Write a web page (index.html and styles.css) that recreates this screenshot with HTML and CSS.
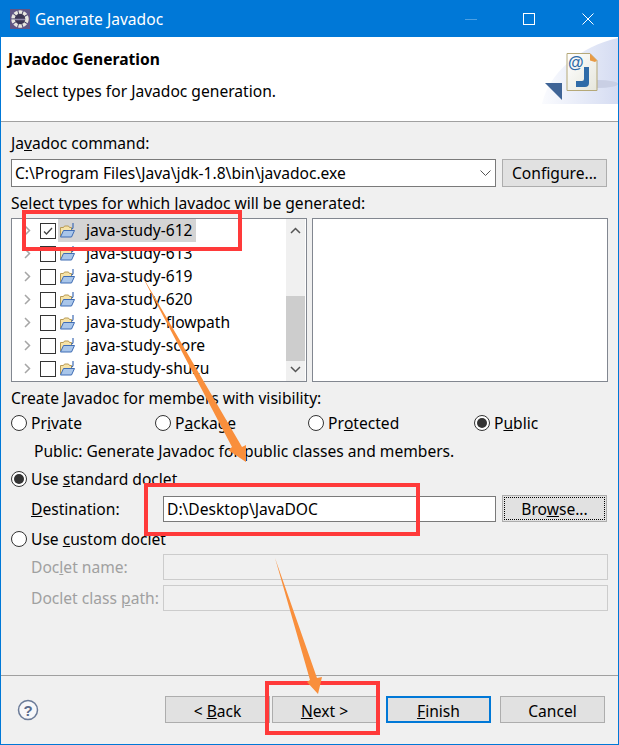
FILE: index.html
```html
<!DOCTYPE html>
<html lang="en">
<head>
    <meta charset="UTF-8">
    <title>Generate Javadoc</title>
    <link rel="stylesheet" href="styles.css">
</head>
<body>

<div class="window">

    <div class="titlebar">
        <svg class="app-icon" width="20" height="20" viewBox="0 0 20 20">
            <rect width="20" height="20" fill="#5f5585"/>
            <circle cx="10" cy="10" r="7" fill="#3c3654" stroke="#e8e6e0" stroke-width="3.500" stroke-dasharray="3.500 1"/>
            <path d="M5 10.500h10" stroke="#8f88a8" stroke-width="1.500"/>
        </svg>
        <span class="title">Generate Javadoc</span>
        <div class="win-controls">
            <svg width="12" height="12" viewBox="0 0 12 12" class="win-min"><path d="M0 6.500h12" stroke="#4da0e3"/></svg>
            <svg width="12" height="12" viewBox="0 0 12 12" class="win-max"><rect x=".5" y=".5" width="11" height="11" fill="none" stroke="#fff"/></svg>
            <svg width="12" height="12" viewBox="0 0 12 12" class="win-close"><path d="M.5 .5l11 11M11.500 .5l-11 11" stroke="#fff"/></svg>
        </div>
    </div>

    <div class="banner">
        <div class="banner-text">
            <h1>Javadoc Generation</h1>
            <p>Select types for Javadoc generation.</p>
        </div>
        <svg class="banner-art" width="76" height="66" viewBox="0 0 76 66">
            <defs>
                <linearGradient id="fade" x1="0" x2="1" y1="0" y2="0">
                    <stop offset="0" stop-color="#fafbfe"/>
                    <stop offset="1" stop-color="#d5dcf2"/>
                </linearGradient>
                <linearGradient id="page" x1="0" x2="1" y1="0" y2="1">
                    <stop offset="0" stop-color="#ffffff"/>
                    <stop offset="1" stop-color="#e6e6dc"/>
                </linearGradient>
            </defs>
            <path d="M0 66C6 36 38 8 76 0V66z" fill="url(#fade)"/>
            <ellipse cx="56" cy="46" rx="20" ry="4" fill="#c9cfe4"/>
            <path d="M25 15.500h23l7 7v30H25z" fill="url(#page)" stroke="#b5a878"/>
            <path d="M48 15.500l7 7-2 1.500-5-1.500z" fill="#e89a45"/>
            <text x="26" y="30" class="art-at">@</text>
            <path d="M42 29h5v16q0 4-4 4h-9v-6h6q2 0 2-2z" fill="#2f6ba8"/>
            <path d="M3 45h17v17z" fill="#3f6496"/>
        </svg>
    </div>

    <div class="content">
        <label class="line first-line">Ja<u>v</u>adoc command:</label>
        <div class="field-row combo-row">
            <div class="combo">
                <span>C:\Program Files\Java\jdk-1.8\bin\javadoc.exe</span>
                <svg width="11" height="6" viewBox="0 0 11 6"><path d="M.5 .5l5 5 5-5" fill="none" stroke="#555"/></svg>
            </div>
            <button class="btn side-btn">Confi<u>g</u>ure...</button>
        </div>

        <label class="line select-line">Select types for which Javadoc will be generated:</label>
        <div class="lists">
            <div class="tree">
                <div class="tree-rows">
                    <div class="tree-row">
                        <svg class="chev" width="7" height="11" viewBox="0 0 7 11"><path d="M1 1l4.500 4.500L1 10" fill="none" stroke="#a6a6a6" stroke-width="1.500"/></svg>
                        <span class="check"><svg width="14" height="14" viewBox="0 0 14 14"><path d="M3 7.500l2.500 2.500L11 4" fill="none" stroke="#444" stroke-width="1.300"/></svg></span>
                        <span class="row-sel">
                            <svg class="folder" width="17" height="16" viewBox="0 0 17 16"><use href="#project"/></svg>
                            <span class="row-name">java-study-612</span>
                        </span>
                    </div>
                    <div class="tree-row">
                        <svg class="chev" width="7" height="11" viewBox="0 0 7 11"><path d="M1 1l4.500 4.500L1 10" fill="none" stroke="#a6a6a6" stroke-width="1.500"/></svg>
                        <span class="check"></span>
                        <span class="row-sel">
                            <svg class="folder" width="17" height="16" viewBox="0 0 17 16"><use href="#project"/></svg>
                            <span class="row-name">java-study-613</span>
                        </span>
                    </div>
                    <div class="tree-row">
                        <svg class="chev" width="7" height="11" viewBox="0 0 7 11"><path d="M1 1l4.500 4.500L1 10" fill="none" stroke="#a6a6a6" stroke-width="1.500"/></svg>
                        <span class="check"></span>
                        <span class="row-sel">
                            <svg class="folder" width="17" height="16" viewBox="0 0 17 16"><use href="#project"/></svg>
                            <span class="row-name">java-study-619</span>
                        </span>
                    </div>
                    <div class="tree-row">
                        <svg class="chev" width="7" height="11" viewBox="0 0 7 11"><path d="M1 1l4.500 4.500L1 10" fill="none" stroke="#a6a6a6" stroke-width="1.500"/></svg>
                        <span class="check"></span>
                        <span class="row-sel">
                            <svg class="folder" width="17" height="16" viewBox="0 0 17 16"><use href="#project"/></svg>
                            <span class="row-name">java-study-620</span>
                        </span>
                    </div>
                    <div class="tree-row">
                        <svg class="chev" width="7" height="11" viewBox="0 0 7 11"><path d="M1 1l4.500 4.500L1 10" fill="none" stroke="#a6a6a6" stroke-width="1.500"/></svg>
                        <span class="check"></span>
                        <span class="row-sel">
                            <svg class="folder" width="17" height="16" viewBox="0 0 17 16"><use href="#project"/></svg>
                            <span class="row-name">java-study-flowpath</span>
                        </span>
                    </div>
                    <div class="tree-row">
                        <svg class="chev" width="7" height="11" viewBox="0 0 7 11"><path d="M1 1l4.500 4.500L1 10" fill="none" stroke="#a6a6a6" stroke-width="1.500"/></svg>
                        <span class="check"></span>
                        <span class="row-sel">
                            <svg class="folder" width="17" height="16" viewBox="0 0 17 16"><use href="#project"/></svg>
                            <span class="row-name">java-study-score</span>
                        </span>
                    </div>
                    <div class="tree-row">
                        <svg class="chev" width="7" height="11" viewBox="0 0 7 11"><path d="M1 1l4.500 4.500L1 10" fill="none" stroke="#a6a6a6" stroke-width="1.500"/></svg>
                        <span class="check"></span>
                        <span class="row-sel">
                            <svg class="folder" width="17" height="16" viewBox="0 0 17 16"><use href="#project"/></svg>
                            <span class="row-name">java-study-shuzu</span>
                        </span>
                    </div>
                </div>
                <div class="scrollbar">
                    <svg width="11" height="7" viewBox="0 0 11 7"><path d="M1 6l4.500-4.500L10 6" fill="none" stroke="#555" stroke-width="1.500"/></svg>
                    <div class="scroll-track"><div class="scroll-thumb"></div></div>
                    <svg width="11" height="7" viewBox="0 0 11 7"><path d="M1 1l4.500 4.500L10 1" fill="none" stroke="#555" stroke-width="1.500"/></svg>
                </div>
            </div>
            <div class="members"></div>
        </div>

        <label class="line visibility-line">Create Javadoc for members with visibility:</label>
        <div class="radio-grid">
            <div class="radio-item"><span class="radio"></span>Pr<u>i</u>vate</div>
            <div class="radio-item"><span class="radio"></span>P<u>a</u>ckage</div>
            <div class="radio-item"><span class="radio"></span>Pr<u>o</u>tected</div>
            <div class="radio-item"><span class="radio on"></span>P<u>u</u>blic</div>
        </div>
        <p class="line desc">Public: Generate Javadoc for public classes and members.</p>

        <div class="radio-item standard"><span class="radio on"></span>Use <u>s</u>tandard doclet</div>
        <div class="field-row dest-row">
            <label class="field-label"><u>D</u>estination:</label>
            <div class="input">D:\Desktop\JavaDOC</div>
            <button class="btn side-btn focused">Bro<u>w</u>se...</button>
        </div>

        <div class="radio-item custom"><span class="radio"></span>Use <u>c</u>ustom doclet</div>
        <div class="field-row doclet-row">
            <label class="field-label off">Doc<u>l</u>et name:</label>
            <div class="input off"></div>
        </div>
        <div class="field-row path-row">
            <label class="field-label off">Doclet class <u>p</u>ath:</label>
            <div class="input off"></div>
        </div>
    </div>

    <div class="footer">
        <svg class="help" width="22" height="22" viewBox="0 0 22 22">
            <circle cx="11" cy="11" r="9.500" fill="#f7f7f9" stroke="#6b7b98" stroke-width="1.500"/>
            <text x="11" y="16.500" text-anchor="middle" class="help-mark">?</text>
        </svg>
        <div class="buttons">
            <button class="btn">&lt; <u>B</u>ack</button>
            <button class="btn next-btn"><u>N</u>ext &gt;</button>
            <button class="btn default-btn"><u>F</u>inish</button>
            <button class="btn cancel-btn">Cancel</button>
        </div>
    </div>

    <!-- red boxes and arrows drawn over the screenshot -->
    <svg class="notes" width="619" height="745" viewBox="0 0 619 745">
        <rect x="24" y="212" width="216" height="37" fill="none" stroke="#ff3a3a" stroke-width="4"/>
        <rect x="146" y="485" width="272" height="49" fill="none" stroke="#ff3a3a" stroke-width="4"/>
        <rect x="267" y="683" width="111" height="50" fill="none" stroke="#ff3a3a" stroke-width="4"/>
        <path d="M140 272L242 447L246 445L246 462L228 450L232 447z" fill="#f98f3c"/>
        <path d="M275 558L317 678L322 677L318 694L307 682L310 680z" fill="#f98f3c"/>
    </svg>

    <svg width="0" height="0" class="defs">
        <symbol id="project" viewBox="0 0 17 16">
            <path d="M1.500 13V4.500h3l1-1.500h4l1 1.500h2V7" fill="#f6e3a8" stroke="#b89a55"/>
            <path d="M1.500 14l3-6.500h11l-3 6.500z" fill="#a9c6ea" stroke="#3f6cb4"/>
            <path d="M14 0v4.500q0 1.500-2 1.500" fill="none" stroke="#3f6cb4" stroke-width="1.200"/>
        </symbol>
    </svg>

</div>

</body>
</html>
```

FILE: styles.css
```css
* {
    box-sizing: border-box;
}

body {
    margin: 0;
    font-family: "Noto Sans", "Open Sans", sans-serif;
    font-size: 15.6px;
    color: #000;
}

.window {
    position: relative;
    width: 619px;
    height: 745px;
    display: flex;
    flex-direction: column;
    background-color: #f0f0f0;
    border: 1px solid #0078d7;
    border-top: 0;
    overflow: hidden;
}

.titlebar {
    height: 37px;
    flex: none;
    display: flex;
    align-items: center;
    padding-left: 9px;
    background-color: #0078d7;
    color: #fff;
}

.title {
    margin-left: 5px;
}

.win-controls {
    margin-left: auto;
    display: flex;
    align-items: center;
    padding-right: 24px;
}

.win-controls svg {
    display: block;
}

.win-max {
    margin-left: 46px;
}

.win-close {
    margin-left: 47px;
}

.banner {
    height: 85px;
    flex: none;
    display: flex;
    justify-content: space-between;
    align-items: flex-start;
    background-color: #fff;
    border-bottom: 1px solid #a0a0a0;
}

.banner-text {
    padding: 11px 0 0 7px;
}

.banner h1 {
    margin: 0;
    font-size: 15.6px;
    font-weight: 700;
    line-height: 22px;
}

.banner p {
    margin: 10px 0 0 7px;
    line-height: 22px;
}

.banner-art {
    display: block;
    margin-top: 1px;
}

.art-at {
    font-family: "Liberation Sans", sans-serif;
    font-size: 16px;
    font-weight: 700;
    fill: #2f6ba8;
}

.content {
    flex: 1;
    padding: 11px 10px 0;
}

.line {
    display: block;
    height: 20px;
    line-height: 20px;
    margin: 0;
    white-space: nowrap;
}

.select-line {
    margin-top: 6px;
}

.visibility-line {
    margin-top: 6px;
}

.field-row {
    display: flex;
    align-items: stretch;
}

.combo-row {
    height: 28px;
    margin-top: 6px;
    gap: 6px;
}

.combo {
    flex: 1;
    display: flex;
    align-items: center;
    justify-content: space-between;
    padding: 0 4px 0 3px;
    background-color: #fff;
    border: 1px solid #7a7a7a;
}

.btn {
    font: inherit;
    color: #000;
    height: 27px;
    width: 105px;
    padding: 0;
    background-color: #e1e1e1;
    border: 1px solid #adadad;
}

.side-btn {
    flex: none;
    height: 28px;
    margin-right: 1px;
}

.focused {
    outline: 1px dotted #000;
    outline-offset: -3px;
}

.lists {
    display: flex;
    gap: 5px;
    height: 164px;
    margin-top: 5px;
}

.tree {
    width: 296px;
    display: flex;
    background-color: #fff;
    border: 1px solid #828790;
}

.tree-rows {
    flex: 1;
    overflow: hidden;
}

.tree-row {
    height: 23px;
    display: flex;
    align-items: center;
    padding-left: 12px;
}

.chev {
    flex: none;
}

.check {
    flex: none;
    width: 16px;
    height: 16px;
    margin-left: 9px;
    display: flex;
    align-items: center;
    justify-content: center;
    background-color: #fff;
    border: 1px solid #333;
}

.row-sel {
    height: 23px;
    display: flex;
    align-items: center;
    margin-left: 2px;
    padding: 0 3px 0 1px;
}

.tree-row:first-child .row-sel {
    background-color: #d4d4d4;
}

.folder {
    flex: none;
    margin-right: 10px;
}

.row-name {
    padding-bottom: 2px;
}

.scrollbar {
    flex: none;
    width: 19px;
    margin-right: 1px;
    display: flex;
    flex-direction: column;
    align-items: center;
    padding: 8px 0;
    background-color: #f0f0f0;
}

.scroll-track {
    flex: 1;
    align-self: stretch;
    padding-top: 62px;
}

.scroll-thumb {
    height: 65px;
    background-color: #cdcdcd;
}

.members {
    width: 296px;
    background-color: #fff;
    border: 1px solid #828790;
}

.radio-grid {
    display: grid;
    grid-template-columns: 144px 153px 166px 1fr;
    margin-top: 5px;
}

.radio-item {
    height: 20px;
    display: flex;
    align-items: center;
    white-space: pre;
}

.radio {
    flex: none;
    width: 16px;
    height: 16px;
    margin-right: 4px;
    display: flex;
    align-items: center;
    justify-content: center;
    background-color: #fff;
    border: 1px solid #333;
    border-radius: 50%;
}

.radio.on::after {
    content: "";
    width: 10px;
    height: 10px;
    border-radius: 50%;
    background-color: #333;
}

.desc {
    margin: 8px 0 0 23px;
}

.standard {
    margin-top: 8px;
}

.dest-row {
    height: 27px;
    margin-top: 6px;
    align-items: center;
}

.field-label {
    width: 152px;
    padding-left: 20px;
    flex: none;
    white-space: nowrap;
}

.field-label.off {
    color: #a0a0a0;
}

.input {
    flex: 1;
    height: 26px;
    line-height: 24px;
    padding-left: 3px;
    background-color: #fff;
    border: 1px solid #7a7a7a;
}

.input.off {
    background-color: #f0f0f0;
    border-color: #ccc;
}

.dest-row .input {
    margin-right: 6px;
}

.dest-row .side-btn {
    height: 27px;
}

.custom {
    margin-top: 7px;
}

.doclet-row {
    height: 26px;
    margin-top: 5px;
    align-items: center;
}

.path-row {
    height: 26px;
    margin-top: 5px;
    align-items: center;
}

.footer {
    height: 69px;
    flex: none;
    display: flex;
    justify-content: space-between;
    padding: 20px 13px 0 16px;
    border-top: 1px solid #a0a0a0;
}

.help {
    display: block;
    margin-top: 3px;
}

.help-mark {
    font-family: "Liberation Sans", sans-serif;
    font-size: 15px;
    font-weight: 700;
    fill: #5a6b8c;
}

.buttons {
    display: flex;
}

.buttons .btn {
    padding-top: 2px;
}

.next-btn {
    margin-left: 2px;
}

.default-btn {
    margin-left: 9px;
    border: 2px solid #0078d7;
}

.cancel-btn {
    margin-left: 9px;
}

.notes {
    position: absolute;
    top: 0;
    left: -1px;
    pointer-events: none;
}

.defs {
    position: absolute;
}
```
